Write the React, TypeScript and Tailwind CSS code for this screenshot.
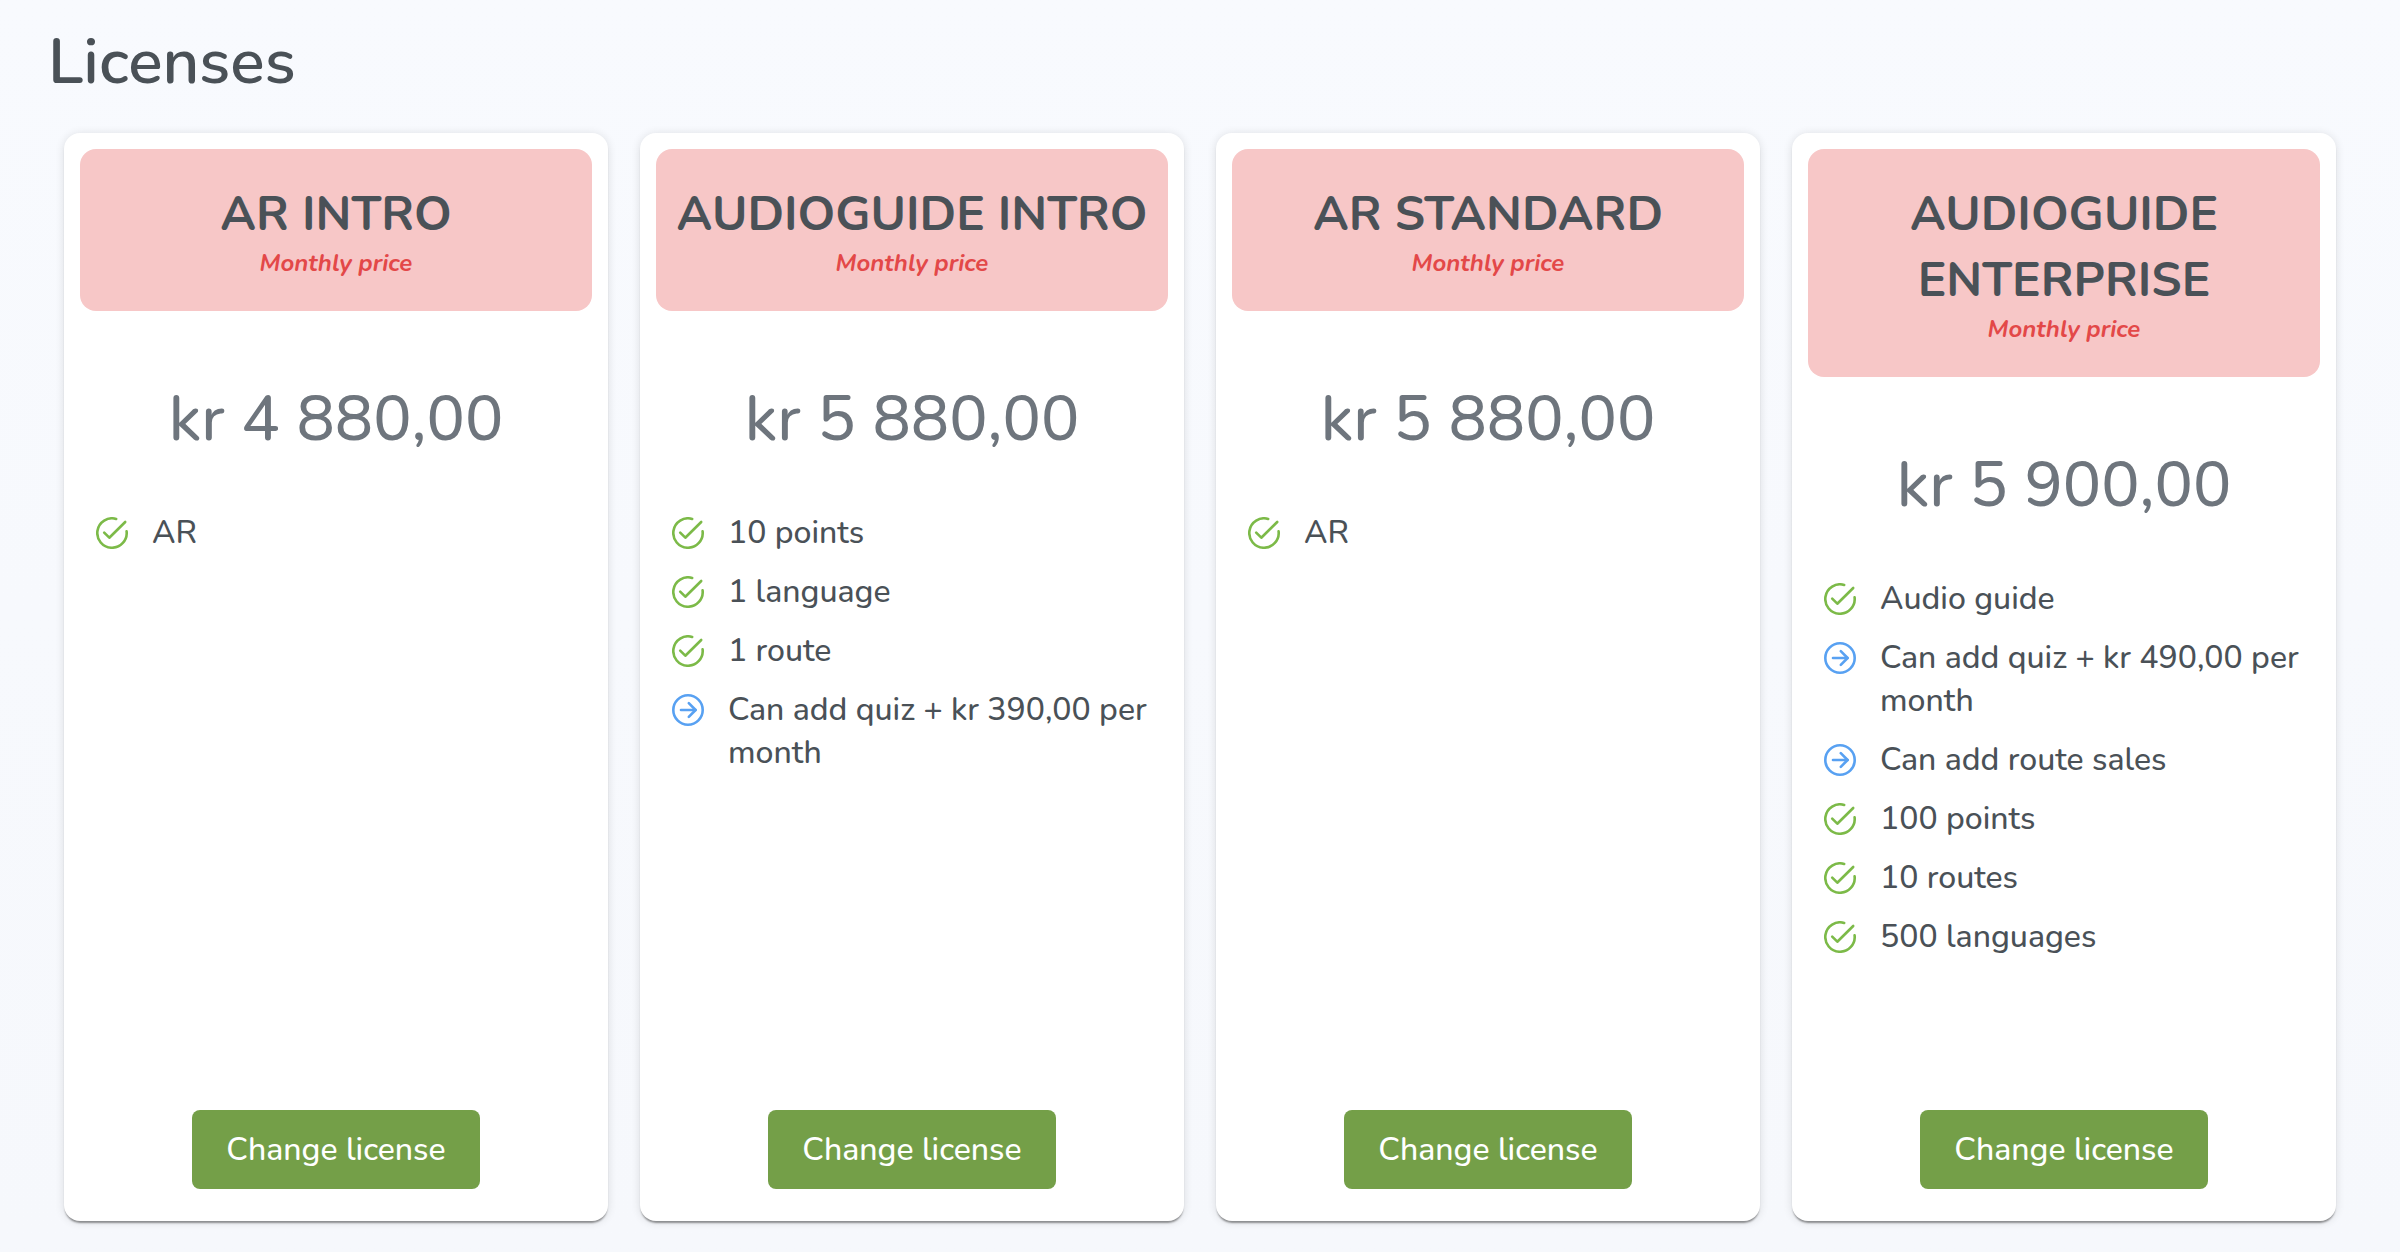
interface Feature {
  label: string;
  addon?: boolean;
}

interface License {
  name: string;
  price: string;
  features: Feature[];
}

const licenses: License[] = [
  {
    name: "AR INTRO",
    price: "kr 4 880,00",
    features: [{ label: "AR" }],
  },
  {
    name: "AUDIOGUIDE INTRO",
    price: "kr 5 880,00",
    features: [
      { label: "10 points" },
      { label: "1 language" },
      { label: "1 route" },
      { label: "Can add quiz + kr 390,00 per month", addon: true },
    ],
  },
  {
    name: "AR STANDARD",
    price: "kr 5 880,00",
    features: [{ label: "AR" }],
  },
  {
    name: "AUDIOGUIDE ENTERPRISE",
    price: "kr 5 900,00",
    features: [
      { label: "Audio guide" },
      { label: "Can add quiz + kr 490,00 per month", addon: true },
      { label: "Can add route sales", addon: true },
      { label: "100 points" },
      { label: "10 routes" },
      { label: "500 languages" },
    ],
  },
];

function CheckIcon() {
  return (
    <svg
      className="mt-1.5 size-8 shrink-0 text-[#7cba48]"
      viewBox="0 0 32 32"
      fill="none"
      stroke="currentColor"
      strokeWidth="2.6"
      strokeLinecap="round"
      strokeLinejoin="round"
      aria-hidden="true"
    >
      <path d="M20.2 1.95A14.7 14.7 0 1 0 30.6 14.4" />
      <path d="M8.2 15.6L13.3 20.7L29.2 5" />
    </svg>
  );
}

function ArrowIcon() {
  return (
    <svg
      className="mt-1.5 size-8 shrink-0 text-[#58a1f2]"
      viewBox="0 0 32 32"
      fill="none"
      stroke="currentColor"
      strokeWidth="2.6"
      strokeLinecap="round"
      strokeLinejoin="round"
      aria-hidden="true"
    >
      <circle cx="16" cy="16" r="14.7" />
      <path d="M9 16H23.6" />
      <path d="M16.8 9.2L23.6 16L16.8 22.8" />
    </svg>
  );
}

function LicenseCard({ license }: { license: License }) {
  return (
    <article className="flex flex-col rounded-2xl bg-white p-4 pb-8 shadow-[0_3px_2px_-1px_rgba(0,0,0,0.4),0_1px_10px_rgba(0,0,0,0.12)]">
      <header className="rounded-2xl bg-[#f7c7c7] py-8 text-center">
        <h2 className="text-5xl leading-[66px] font-bold text-[#4a5157]">{license.name}</h2>
        <p className="text-2xl leading-8 font-bold text-[#e34848] italic">Monthly price</p>
      </header>

      <p className="mt-16 text-center text-[64px] leading-[88px] text-[#6e757d]">{license.price}</p>

      <ul className="mt-12 mb-8 flex flex-1 flex-col gap-4 px-4">
        {license.features.map((feature) => (
          <li key={feature.label} className="flex items-start gap-6">
            {feature.addon ? <ArrowIcon /> : <CheckIcon />}
            <span className="text-[32px] leading-[43px] text-[#4a5157]">{feature.label}</span>
          </li>
        ))}
      </ul>

      <button
        type="button"
        className="cursor-pointer self-center rounded-lg bg-[#749f48] px-[34px] py-[18px] text-[32px] leading-[43px] text-white hover:bg-[#678f3f]"
      >
        Change license
      </button>
    </article>
  );
}

export default function App() {
  return (
    <main className="flex min-h-screen flex-col gap-6 bg-linear-to-b from-[#f8fafe] to-[#f6f8fc] px-12 pt-4 pb-[31px] font-['Nunito','Open_Sans',sans-serif] font-medium">
      <h1 className="text-[64px] leading-[93px] font-semibold text-[#4a5157]">Licenses</h1>
      <section className="grid flex-1 grid-cols-4 gap-8 px-4">
        {licenses.map((license) => (
          <LicenseCard key={license.name} license={license} />
        ))}
      </section>
    </main>
  );
}
